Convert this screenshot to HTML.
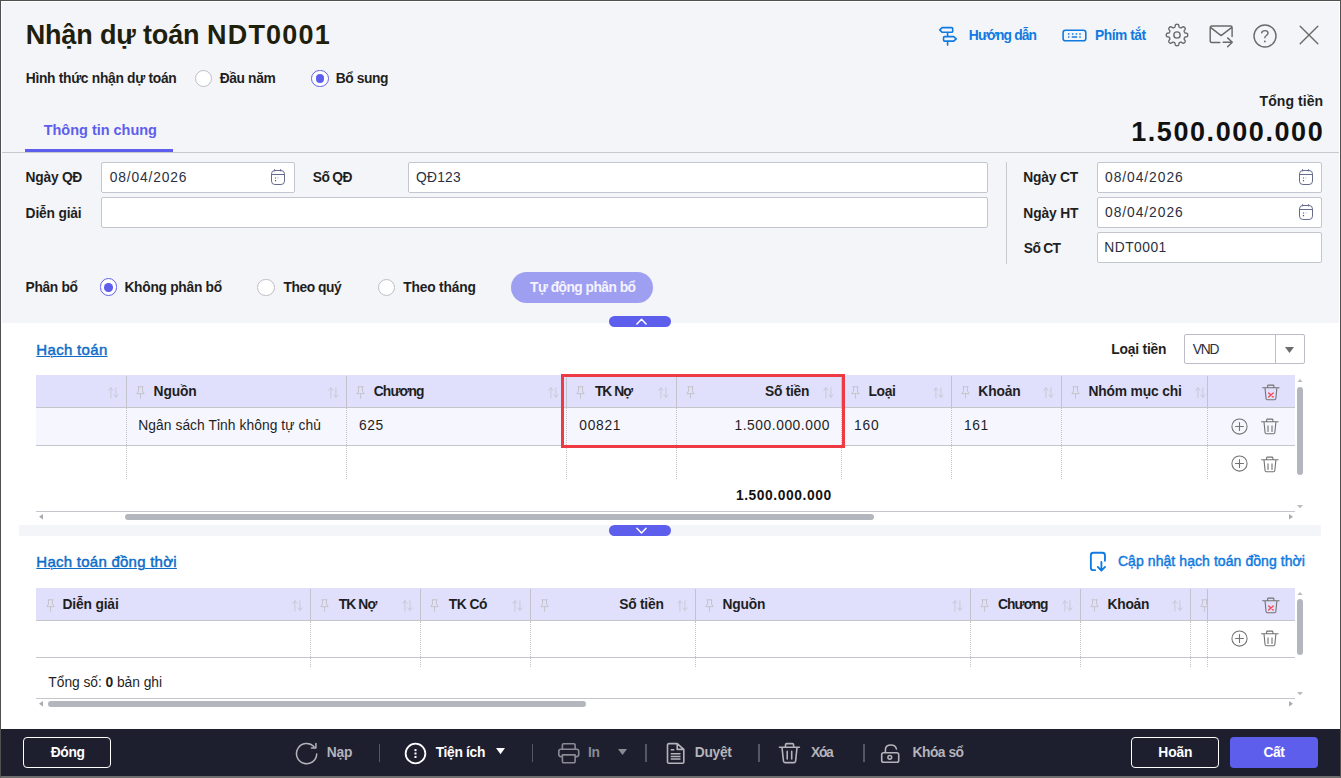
<!DOCTYPE html>
<html lang="vi"><head><meta charset="utf-8"><title>Nhận dự toán NDT0001</title>
<style>
html,body{margin:0;padding:0}
body{width:1341px;height:778px;overflow:hidden;position:relative;background:#fff;font-family:"Liberation Sans", sans-serif;}
.b{position:absolute;display:block}
.t{position:absolute;white-space:nowrap;line-height:1;display:block}
#frame{position:absolute;left:0;top:0;width:1341px;height:778px;box-sizing:border-box;border:1px solid #505050;border-bottom:2px solid #6e6e6e;pointer-events:none}
#frame2{position:absolute;left:1px;top:1px;width:1339px;height:728px;box-sizing:border-box;border:1px solid #fff;border-bottom:0;pointer-events:none}
</style></head><body>
<div class="b" style="left:0px;top:0px;width:1341px;height:323px;background:#f4f5f9"></div>
<span class="t" style="left:25.63px;top:22.00px;font-size:27px;font-weight:700;color:#1f200c;letter-spacing:-0.148px;">Nhận dự toán</span>
<span class="t" style="left:207.03px;top:22.00px;font-size:27px;font-weight:700;color:#1f200c;letter-spacing:1.204px;">NDT0001</span>
<span class="t" style="left:968.82px;top:29.00px;font-size:13.8px;font-weight:700;color:#0f7ae0;letter-spacing:-0.847px;">Hướng dẫn</span>
<span class="t" style="left:1095.12px;top:29.00px;font-size:13.8px;font-weight:700;color:#0f7ae0;letter-spacing:-0.488px;">Phím tắt</span>
<span class="t" style="left:25.72px;top:72.00px;font-size:13.8px;font-weight:700;color:#1f1f1f;letter-spacing:-0.295px;">Hình thức nhận dự toán</span>
<div class="b" style="left:194.60px;top:69.90px;width:17.4px;height:17.4px;border-radius:50%;border:1px solid #bdbdc6;background:#fff;box-sizing:border-box"></div>
<span class="t" style="left:219.75px;top:72.00px;font-size:13.8px;font-weight:700;color:#1f1f1f;letter-spacing:-0.385px;">Đầu năm</span>
<div class="b" style="left:311.00px;top:69.60px;width:17.8px;height:17.8px;border-radius:50%;border:1.5px solid #5e5eec;background:#fff;box-sizing:border-box"></div>
<div class="b" style="left:315.65px;top:74.25px;width:8.5px;height:8.5px;border-radius:50%;background:#5e5eec"></div>
<span class="t" style="left:335.82px;top:72.00px;font-size:13.8px;font-weight:700;color:#1f1f1f;letter-spacing:-0.413px;">Bổ sung</span>
<span class="t" style="left:43.7px;top:123.00px;font-size:14.5px;font-weight:700;color:#5e5eec;letter-spacing:-0.02px;">Thông tin chung</span>
<div class="b" style="left:25px;top:149px;width:148px;height:3px;background:#5e5eec"></div>
<div class="b" style="left:1px;top:152px;width:1339px;height:1px;background:#c9c9cc"></div>
<span class="t" style="left:1259.61px;top:94.00px;font-size:14px;font-weight:700;color:#1f1f1f;letter-spacing:0.057px;">Tổng tiền</span>
<span class="t" style="left:1131.13px;top:119.00px;font-size:27px;font-weight:700;color:#111;letter-spacing:1.573px;">1.500.000.000</span>
<span class="t" style="left:25.62px;top:171.00px;font-size:13.8px;font-weight:700;color:#1f1f1f;letter-spacing:-0.26px;">Ngày QĐ</span>
<div class="b" style="left:101px;top:162px;width:194px;height:31px;background:#fff;border:1px solid #c4c6cf;border-radius:2px;box-sizing:border-box"></div>
<span class="t" style="left:109.74px;top:171.00px;font-size:13.8px;font-weight:400;color:#2b2f42;letter-spacing:0.855px;">08/04/2026</span>
<span class="t" style="left:312.87px;top:171.00px;font-size:13.8px;font-weight:700;color:#1f1f1f;letter-spacing:-0.65px;">Số QĐ</span>
<div class="b" style="left:408px;top:162px;width:580px;height:31px;background:#fff;border:1px solid #c4c6cf;border-radius:2px;box-sizing:border-box"></div>
<span class="t" style="left:416.0px;top:171.00px;font-size:13.8px;font-weight:400;color:#2b2f42;letter-spacing:0.219px;">QĐ123</span>
<span class="t" style="left:25.62px;top:207.00px;font-size:13.8px;font-weight:700;color:#1f1f1f;letter-spacing:-0.187px;">Diễn giải</span>
<div class="b" style="left:101px;top:197px;width:887px;height:31px;background:#fff;border:1px solid #c4c6cf;border-radius:2px;box-sizing:border-box"></div>
<div class="b" style="left:1006px;top:162px;width:1px;height:102px;background:#c9c9cc"></div>
<span class="t" style="left:1023.32px;top:171.00px;font-size:13.8px;font-weight:700;color:#1f1f1f;letter-spacing:-0.198px;">Ngày CT</span>
<span class="t" style="left:1023.32px;top:207.00px;font-size:13.8px;font-weight:700;color:#1f1f1f;letter-spacing:-0.131px;">Ngày HT</span>
<span class="t" style="left:1023.87px;top:242.00px;font-size:13.8px;font-weight:700;color:#1f1f1f;letter-spacing:-0.682px;">Số CT</span>
<div class="b" style="left:1097px;top:162px;width:225px;height:31px;background:#fff;border:1px solid #c4c6cf;border-radius:2px;box-sizing:border-box"></div>
<span class="t" style="left:1105.04px;top:171.00px;font-size:13.8px;font-weight:400;color:#2b2f42;letter-spacing:0.955px;">08/04/2026</span>
<div class="b" style="left:1097px;top:197px;width:225px;height:31px;background:#fff;border:1px solid #c4c6cf;border-radius:2px;box-sizing:border-box"></div>
<span class="t" style="left:1105.04px;top:206.00px;font-size:13.8px;font-weight:400;color:#2b2f42;letter-spacing:0.955px;">08/04/2026</span>
<div class="b" style="left:1097px;top:232px;width:225px;height:31px;background:#fff;border:1px solid #c4c6cf;border-radius:2px;box-sizing:border-box"></div>
<span class="t" style="left:1104.35px;top:241.00px;font-size:13.8px;font-weight:400;color:#2b2f42;letter-spacing:0.472px;">NDT0001</span>
<span class="t" style="left:25.52px;top:281.00px;font-size:13.8px;font-weight:700;color:#1f1f1f;letter-spacing:-0.338px;">Phân bổ</span>
<div class="b" style="left:99.60px;top:278.40px;width:17.8px;height:17.8px;border-radius:50%;border:1.5px solid #5e5eec;background:#fff;box-sizing:border-box"></div>
<div class="b" style="left:104.25px;top:283.05px;width:8.5px;height:8.5px;border-radius:50%;background:#5e5eec"></div>
<span class="t" style="left:124.42px;top:281.00px;font-size:13.8px;font-weight:700;color:#1f1f1f;letter-spacing:-0.281px;">Không phân bổ</span>
<div class="b" style="left:257.30px;top:278.60px;width:17.4px;height:17.4px;border-radius:50%;border:1px solid #bdbdc6;background:#fff;box-sizing:border-box"></div>
<span class="t" style="left:283.61px;top:281.00px;font-size:13.8px;font-weight:700;color:#1f1f1f;letter-spacing:-0.471px;">Theo quý</span>
<div class="b" style="left:377.80px;top:278.60px;width:17.4px;height:17.4px;border-radius:50%;border:1px solid #bdbdc6;background:#fff;box-sizing:border-box"></div>
<span class="t" style="left:403.21px;top:281.00px;font-size:13.8px;font-weight:700;color:#1f1f1f;letter-spacing:-0.181px;">Theo tháng</span>
<div class="b" style="left:511px;top:272px;width:142px;height:31px;background:#9f9ff1;border-radius:16px"></div>
<span class="t" style="left:530.01px;top:281.00px;font-size:13.8px;font-weight:700;color:#f4f4ff;letter-spacing:-0.532px;">Tự động phân bổ</span>
<div class="b" style="left:0px;top:323px;width:1341px;height:406px;background:#fff"></div>
<div class="b" style="left:19px;top:525px;width:1302px;height:11px;background:#f4f5f9"></div>
<div class="b" style="left:609px;top:316px;width:62px;height:11px;background:#5e5eec;border-radius:5.5px"></div>
<svg class="b" style="left:635.5px;top:318px;" width="11" height="7.2" viewBox="0 0 11 7.2" fill="none"><path d="M0.9 6 L5.5 1.2 L10.1 6" stroke="#fff" stroke-width="1.5" stroke-linecap="round" stroke-linejoin="round"/></svg>
<div class="b" style="left:609px;top:525px;width:62px;height:11px;background:#5e5eec;border-radius:5.5px"></div>
<svg class="b" style="left:635.5px;top:527px;" width="11" height="7.2" viewBox="0 0 11 7.2" fill="none"><path d="M0.9 1.2 L5.5 6 L10.1 1.2" stroke="#fff" stroke-width="1.5" stroke-linecap="round" stroke-linejoin="round"/></svg>
<span class="t" style="left:36.35px;top:342.00px;font-size:15px;font-weight:400;color:#0e6cc8;letter-spacing:0.314px;text-decoration:underline;text-underline-offset:1px;text-decoration-thickness:1px;-webkit-text-stroke:0.45px #0e6cc8">Hạch toán</span>
<span class="t" style="left:1111.32px;top:343.00px;font-size:13.8px;font-weight:700;color:#1f1f1f;letter-spacing:-0.19px;">Loại tiền</span>
<div class="b" style="left:1184px;top:334px;width:121px;height:30px;background:#fff;border:1px solid #bcbdc6;border-radius:2px;box-sizing:border-box"></div>
<div class="b" style="left:1275px;top:335px;width:1px;height:28px;background:#bcbdc6"></div>
<svg class="b" style="left:1285px;top:347px;" width="9" height="6" viewBox="0 0 9 6" fill="none"><path d="M0 0 H9 L4.5 6 Z" fill="#6c6c6c"/></svg>
<span class="t" style="left:1192.75px;top:343.00px;font-size:13.8px;font-weight:400;color:#2b2f42;letter-spacing:-1.202px;">VND</span>
<div class="b" style="left:36px;top:375px;width:1259px;height:32px;background:#e0e0fd"></div>
<div class="b" style="left:36px;top:407px;width:1259px;height:1px;background:#c5c6cc"></div>
<div class="b" style="left:36px;top:408px;width:1259px;height:37px;background:#f5f6fe"></div>
<div class="b" style="left:36px;top:445px;width:1259px;height:1px;background:#c5c6cc"></div>
<div class="b" style="left:126px;top:376px;width:1px;height:31px;background:#c2c2cc"></div>
<div class="b" style="left:126px;top:408px;width:0px;height:71px;border-left:1px dotted #c2c2c2"></div>
<div class="b" style="left:346px;top:376px;width:1px;height:31px;background:#c2c2cc"></div>
<div class="b" style="left:346px;top:408px;width:0px;height:71px;border-left:1px dotted #c2c2c2"></div>
<div class="b" style="left:566px;top:376px;width:1px;height:31px;background:#c2c2cc"></div>
<div class="b" style="left:566px;top:408px;width:0px;height:71px;border-left:1px dotted #c2c2c2"></div>
<div class="b" style="left:676px;top:376px;width:1px;height:31px;background:#c2c2cc"></div>
<div class="b" style="left:676px;top:408px;width:0px;height:71px;border-left:1px dotted #c2c2c2"></div>
<div class="b" style="left:841px;top:376px;width:1px;height:31px;background:#c2c2cc"></div>
<div class="b" style="left:841px;top:408px;width:0px;height:71px;border-left:1px dotted #c2c2c2"></div>
<div class="b" style="left:951px;top:376px;width:1px;height:31px;background:#c2c2cc"></div>
<div class="b" style="left:951px;top:408px;width:0px;height:71px;border-left:1px dotted #c2c2c2"></div>
<div class="b" style="left:1061px;top:376px;width:1px;height:31px;background:#c2c2cc"></div>
<div class="b" style="left:1061px;top:408px;width:0px;height:71px;border-left:1px dotted #c2c2c2"></div>
<div class="b" style="left:1207px;top:376px;width:1px;height:31px;background:#c2c2cc"></div>
<div class="b" style="left:1207px;top:408px;width:0px;height:71px;border-left:1px dotted #c2c2c2"></div>
<svg class="b" style="left:107.5px;top:386.5px;" width="11.5" height="12" viewBox="0 0 11.5 12" fill="none"><path d="M2.9 11.1 V0.9 M0.8 3.3 L2.9 0.8 L5 3.3 M7.9 0.8 V10.2 M5.7 7.8 L7.9 10.3 L10.1 7.8" stroke="#c8c9d4" stroke-width="1" stroke-linecap="round" stroke-linejoin="round"/></svg>
<svg class="b" style="left:136.0px;top:385.5px;" width="9" height="13" viewBox="0 0 9 13" fill="none"><path d="M2 0.8 H7 M2.5 0.8 V5 L0.8 7.7 H8.2 L6.5 5 V0.8 M4.5 7.7 V12.2" stroke="#c4c4cb" stroke-width="1" stroke-linecap="round" stroke-linejoin="round"/></svg>
<span class="t" style="left:153.62px;top:385.00px;font-size:13.8px;font-weight:700;color:#1f1f1f;letter-spacing:-0.167px;">Nguồn</span>
<svg class="b" style="left:327.5px;top:386.5px;" width="11.5" height="12" viewBox="0 0 11.5 12" fill="none"><path d="M2.9 11.1 V0.9 M0.8 3.3 L2.9 0.8 L5 3.3 M7.9 0.8 V10.2 M5.7 7.8 L7.9 10.3 L10.1 7.8" stroke="#c8c9d4" stroke-width="1" stroke-linecap="round" stroke-linejoin="round"/></svg>
<svg class="b" style="left:356.0px;top:385.5px;" width="9" height="13" viewBox="0 0 9 13" fill="none"><path d="M2 0.8 H7 M2.5 0.8 V5 L0.8 7.7 H8.2 L6.5 5 V0.8 M4.5 7.7 V12.2" stroke="#c4c4cb" stroke-width="1" stroke-linecap="round" stroke-linejoin="round"/></svg>
<span class="t" style="left:373.8px;top:385.00px;font-size:13.8px;font-weight:700;color:#1f1f1f;letter-spacing:-0.903px;">Chương</span>
<svg class="b" style="left:547.5px;top:386.5px;" width="11.5" height="12" viewBox="0 0 11.5 12" fill="none"><path d="M2.9 11.1 V0.9 M0.8 3.3 L2.9 0.8 L5 3.3 M7.9 0.8 V10.2 M5.7 7.8 L7.9 10.3 L10.1 7.8" stroke="#c8c9d4" stroke-width="1" stroke-linecap="round" stroke-linejoin="round"/></svg>
<svg class="b" style="left:576.0px;top:385.5px;" width="9" height="13" viewBox="0 0 9 13" fill="none"><path d="M2 0.8 H7 M2.5 0.8 V5 L0.8 7.7 H8.2 L6.5 5 V0.8 M4.5 7.7 V12.2" stroke="#c4c4cb" stroke-width="1" stroke-linecap="round" stroke-linejoin="round"/></svg>
<span class="t" style="left:594.91px;top:385.00px;font-size:13.8px;font-weight:700;color:#1f1f1f;letter-spacing:-0.961px;">TK Nợ</span>
<svg class="b" style="left:657.5px;top:386.5px;" width="11.5" height="12" viewBox="0 0 11.5 12" fill="none"><path d="M2.9 11.1 V0.9 M0.8 3.3 L2.9 0.8 L5 3.3 M7.9 0.8 V10.2 M5.7 7.8 L7.9 10.3 L10.1 7.8" stroke="#c8c9d4" stroke-width="1" stroke-linecap="round" stroke-linejoin="round"/></svg>
<svg class="b" style="left:686.0px;top:385.5px;" width="9" height="13" viewBox="0 0 9 13" fill="none"><path d="M2 0.8 H7 M2.5 0.8 V5 L0.8 7.7 H8.2 L6.5 5 V0.8 M4.5 7.7 V12.2" stroke="#c4c4cb" stroke-width="1" stroke-linecap="round" stroke-linejoin="round"/></svg>
<span class="t" style="left:765.07px;top:385.00px;font-size:13.8px;font-weight:700;color:#1f1f1f;letter-spacing:-0.273px;">Số tiền</span>
<svg class="b" style="left:822.5px;top:386.5px;" width="11.5" height="12" viewBox="0 0 11.5 12" fill="none"><path d="M2.9 11.1 V0.9 M0.8 3.3 L2.9 0.8 L5 3.3 M7.9 0.8 V10.2 M5.7 7.8 L7.9 10.3 L10.1 7.8" stroke="#c8c9d4" stroke-width="1" stroke-linecap="round" stroke-linejoin="round"/></svg>
<svg class="b" style="left:851.0px;top:385.5px;" width="9" height="13" viewBox="0 0 9 13" fill="none"><path d="M2 0.8 H7 M2.5 0.8 V5 L0.8 7.7 H8.2 L6.5 5 V0.8 M4.5 7.7 V12.2" stroke="#c4c4cb" stroke-width="1" stroke-linecap="round" stroke-linejoin="round"/></svg>
<span class="t" style="left:868.42px;top:385.00px;font-size:13.8px;font-weight:700;color:#1f1f1f;letter-spacing:-0.318px;">Loại</span>
<svg class="b" style="left:932.5px;top:386.5px;" width="11.5" height="12" viewBox="0 0 11.5 12" fill="none"><path d="M2.9 11.1 V0.9 M0.8 3.3 L2.9 0.8 L5 3.3 M7.9 0.8 V10.2 M5.7 7.8 L7.9 10.3 L10.1 7.8" stroke="#c8c9d4" stroke-width="1" stroke-linecap="round" stroke-linejoin="round"/></svg>
<svg class="b" style="left:961.0px;top:385.5px;" width="9" height="13" viewBox="0 0 9 13" fill="none"><path d="M2 0.8 H7 M2.5 0.8 V5 L0.8 7.7 H8.2 L6.5 5 V0.8 M4.5 7.7 V12.2" stroke="#c4c4cb" stroke-width="1" stroke-linecap="round" stroke-linejoin="round"/></svg>
<span class="t" style="left:978.32px;top:385.00px;font-size:13.8px;font-weight:700;color:#1f1f1f;letter-spacing:-0.128px;">Khoản</span>
<svg class="b" style="left:1042.5px;top:386.5px;" width="11.5" height="12" viewBox="0 0 11.5 12" fill="none"><path d="M2.9 11.1 V0.9 M0.8 3.3 L2.9 0.8 L5 3.3 M7.9 0.8 V10.2 M5.7 7.8 L7.9 10.3 L10.1 7.8" stroke="#c8c9d4" stroke-width="1" stroke-linecap="round" stroke-linejoin="round"/></svg>
<svg class="b" style="left:1071.0px;top:385.5px;" width="9" height="13" viewBox="0 0 9 13" fill="none"><path d="M2 0.8 H7 M2.5 0.8 V5 L0.8 7.7 H8.2 L6.5 5 V0.8 M4.5 7.7 V12.2" stroke="#c4c4cb" stroke-width="1" stroke-linecap="round" stroke-linejoin="round"/></svg>
<span class="t" style="left:1088.42px;top:385.00px;font-size:13.8px;font-weight:700;color:#1f1f1f;letter-spacing:-0.142px;">Nhóm mục chi</span>
<svg class="b" style="left:1194.9px;top:386.5px;" width="11.5" height="12" viewBox="0 0 11.5 12" fill="none"><path d="M2.9 11.1 V0.9 M0.8 3.3 L2.9 0.8 L5 3.3 M7.9 0.8 V10.2 M5.7 7.8 L7.9 10.3 L10.1 7.8" stroke="#c8c9d4" stroke-width="1" stroke-linecap="round" stroke-linejoin="round"/></svg>
<svg class="b" style="left:1261.5px;top:383.6px;" width="18" height="17" viewBox="0 0 18 17" fill="none"><path d="M0.6 3.8 H17.1 M5.6 3.6 V2 Q5.6 1.1 6.5 1.1 H11 Q11.9 1.1 11.9 2 V3.6 M3.0 4 L4.1 14.8 Q4.2 15.8 5.2 15.8 H12.7 Q13.7 15.8 13.8 14.8 L14.9 4" stroke="#727272" stroke-width="1.1" stroke-linecap="round" stroke-linejoin="round"/><path d="M6.7 8.9 L11.2 13 M11.2 8.9 L6.7 13" stroke="#f5434b" stroke-width="1.3" stroke-linecap="round"/></svg>
<span class="t" style="left:138.25px;top:419.00px;font-size:13.8px;font-weight:400;color:#1f1f1f;letter-spacing:0.069px;">Ngân sách Tỉnh không tự chủ</span>
<span class="t" style="left:359.06px;top:419.00px;font-size:13.8px;font-weight:400;color:#1f1f1f;letter-spacing:0.557px;">625</span>
<span class="t" style="left:579.34px;top:419.00px;font-size:13.8px;font-weight:400;color:#1f1f1f;letter-spacing:0.707px;">00821</span>
<span class="t" style="left:734.48px;top:419.00px;font-size:13.8px;font-weight:400;color:#1f1f1f;letter-spacing:0.555px;">1.500.000.000</span>
<span class="t" style="left:854.08px;top:419.00px;font-size:13.8px;font-weight:400;color:#1f1f1f;letter-spacing:0.745px;">160</span>
<span class="t" style="left:964.08px;top:419.00px;font-size:13.8px;font-weight:400;color:#1f1f1f;letter-spacing:0.514px;">161</span>
<svg class="b" style="left:1230.5px;top:417.8px;" width="17" height="17" viewBox="0 0 17 17" fill="none"><circle cx="8.5" cy="8.5" r="7.6" stroke="#727272" stroke-width="1.05"/><path d="M8.5 4.6 V12.4 M4.6 8.5 H12.4" stroke="#727272" stroke-width="1.1" stroke-linecap="round"/></svg>
<svg class="b" style="left:1260.6px;top:417.9px;" width="18" height="17" viewBox="0 0 18 17" fill="none"><path d="M0.6 3.8 H17.1 M5.6 3.6 V2 Q5.6 1.1 6.5 1.1 H11 Q11.9 1.1 11.9 2 V3.6 M3.0 4 L4.1 14.8 Q4.2 15.8 5.2 15.8 H12.7 Q13.7 15.8 13.8 14.8 L14.9 4" stroke="#727272" stroke-width="1.1" stroke-linecap="round" stroke-linejoin="round"/><path d="M7.0 7.9 V13.4 M11.0 7.9 V13.4" stroke="#727272" stroke-width="1.1" stroke-linecap="round"/></svg>
<svg class="b" style="left:1230.5px;top:455.4px;" width="17" height="17" viewBox="0 0 17 17" fill="none"><circle cx="8.5" cy="8.5" r="7.6" stroke="#727272" stroke-width="1.05"/><path d="M8.5 4.6 V12.4 M4.6 8.5 H12.4" stroke="#727272" stroke-width="1.1" stroke-linecap="round"/></svg>
<svg class="b" style="left:1260.6px;top:455.5px;" width="18" height="17" viewBox="0 0 18 17" fill="none"><path d="M0.6 3.8 H17.1 M5.6 3.6 V2 Q5.6 1.1 6.5 1.1 H11 Q11.9 1.1 11.9 2 V3.6 M3.0 4 L4.1 14.8 Q4.2 15.8 5.2 15.8 H12.7 Q13.7 15.8 13.8 14.8 L14.9 4" stroke="#727272" stroke-width="1.1" stroke-linecap="round" stroke-linejoin="round"/><path d="M7.0 7.9 V13.4 M11.0 7.9 V13.4" stroke="#727272" stroke-width="1.1" stroke-linecap="round"/></svg>
<span class="t" style="left:735.92px;top:489.00px;font-size:13.8px;font-weight:700;color:#111;letter-spacing:0.585px;">1.500.000.000</span>
<div class="b" style="left:561px;top:374px;width:284px;height:74px;border:3px solid #ee3a43;box-sizing:border-box"></div>
<div class="b" style="left:36px;top:511px;width:1259px;height:1px;background:#c5c6cc"></div>
<div class="b" style="left:125px;top:514px;width:748.7px;height:6px;background:#b3b6bd;border-radius:3px"></div>
<svg class="b" style="left:39px;top:514.3px;" width="4" height="5.6" viewBox="0 0 4 5.6" fill="none"><path d="M4 0 V5.6 L0 2.8 Z" fill="#a8abb3"/></svg>
<svg class="b" style="left:1288.5px;top:514.3px;" width="4" height="5.6" viewBox="0 0 4 5.6" fill="none"><path d="M0 0 V5.6 L4 2.8 Z" fill="#a8abb3"/></svg>
<div class="b" style="left:1297px;top:387px;width:6px;height:87.5px;background:#b3b6bd;border-radius:3px"></div>
<svg class="b" style="left:1297px;top:378.8px;" width="6" height="3.4" viewBox="0 0 6 3.4" fill="none"><path d="M0 3.4 H6 L3 0 Z" fill="#b9bcc3"/></svg>
<svg class="b" style="left:1297px;top:505px;" width="6" height="3.4" viewBox="0 0 6 3.4" fill="none"><path d="M0 0 H6 L3 3.4 Z" fill="#b9bcc3"/></svg>
<span class="t" style="left:36.35px;top:554.00px;font-size:15px;font-weight:400;color:#0e6cc8;letter-spacing:0.251px;text-decoration:underline;text-underline-offset:1px;text-decoration-thickness:1px;-webkit-text-stroke:0.45px #0e6cc8">Hạch toán đồng thời</span>
<span class="t" style="left:1117.95px;top:554.00px;font-size:14px;font-weight:400;color:#0f7ae0;letter-spacing:0.071px;-webkit-text-stroke:0.45px #0f7ae0">Cập nhật hạch toán đồng thời</span>
<div class="b" style="left:36px;top:588px;width:1259px;height:32px;background:#e0e0fd"></div>
<div class="b" style="left:36px;top:620px;width:1259px;height:1px;background:#c5c6cc"></div>
<div class="b" style="left:36px;top:657px;width:1259px;height:1px;background:#c5c6cc"></div>
<div class="b" style="left:310px;top:589px;width:1px;height:31px;background:#c2c2cc"></div>
<div class="b" style="left:310px;top:621px;width:0px;height:46px;border-left:1px dotted #c2c2c2"></div>
<div class="b" style="left:420px;top:589px;width:1px;height:31px;background:#c2c2cc"></div>
<div class="b" style="left:420px;top:621px;width:0px;height:46px;border-left:1px dotted #c2c2c2"></div>
<div class="b" style="left:530px;top:589px;width:1px;height:31px;background:#c2c2cc"></div>
<div class="b" style="left:530px;top:621px;width:0px;height:46px;border-left:1px dotted #c2c2c2"></div>
<div class="b" style="left:695px;top:589px;width:1px;height:31px;background:#c2c2cc"></div>
<div class="b" style="left:695px;top:621px;width:0px;height:46px;border-left:1px dotted #c2c2c2"></div>
<div class="b" style="left:970px;top:589px;width:1px;height:31px;background:#c2c2cc"></div>
<div class="b" style="left:970px;top:621px;width:0px;height:46px;border-left:1px dotted #c2c2c2"></div>
<div class="b" style="left:1080px;top:589px;width:1px;height:31px;background:#c2c2cc"></div>
<div class="b" style="left:1080px;top:621px;width:0px;height:46px;border-left:1px dotted #c2c2c2"></div>
<div class="b" style="left:1190px;top:589px;width:1px;height:31px;background:#c2c2cc"></div>
<div class="b" style="left:1190px;top:621px;width:0px;height:46px;border-left:1px dotted #c2c2c2"></div>
<div class="b" style="left:1207px;top:589px;width:1px;height:31px;background:#c2c2cc"></div>
<div class="b" style="left:1207px;top:621px;width:0px;height:46px;border-left:1px dotted #c2c2c2"></div>
<svg class="b" style="left:45.5px;top:598.5px;" width="9" height="13" viewBox="0 0 9 13" fill="none"><path d="M2 0.8 H7 M2.5 0.8 V5 L0.8 7.7 H8.2 L6.5 5 V0.8 M4.5 7.7 V12.2" stroke="#c4c4cb" stroke-width="1" stroke-linecap="round" stroke-linejoin="round"/></svg>
<span class="t" style="left:62.52px;top:598.00px;font-size:13.8px;font-weight:700;color:#1f1f1f;letter-spacing:-0.162px;">Diễn giải</span>
<svg class="b" style="left:291.5px;top:599.5px;" width="11.5" height="12" viewBox="0 0 11.5 12" fill="none"><path d="M2.9 11.1 V0.9 M0.8 3.3 L2.9 0.8 L5 3.3 M7.9 0.8 V10.2 M5.7 7.8 L7.9 10.3 L10.1 7.8" stroke="#c8c9d4" stroke-width="1" stroke-linecap="round" stroke-linejoin="round"/></svg>
<svg class="b" style="left:320.0px;top:598.5px;" width="9" height="13" viewBox="0 0 9 13" fill="none"><path d="M2 0.8 H7 M2.5 0.8 V5 L0.8 7.7 H8.2 L6.5 5 V0.8 M4.5 7.7 V12.2" stroke="#c4c4cb" stroke-width="1" stroke-linecap="round" stroke-linejoin="round"/></svg>
<span class="t" style="left:338.81px;top:598.00px;font-size:13.8px;font-weight:700;color:#1f1f1f;letter-spacing:-0.886px;">TK Nợ</span>
<svg class="b" style="left:401.5px;top:599.5px;" width="11.5" height="12" viewBox="0 0 11.5 12" fill="none"><path d="M2.9 11.1 V0.9 M0.8 3.3 L2.9 0.8 L5 3.3 M7.9 0.8 V10.2 M5.7 7.8 L7.9 10.3 L10.1 7.8" stroke="#c8c9d4" stroke-width="1" stroke-linecap="round" stroke-linejoin="round"/></svg>
<svg class="b" style="left:430.0px;top:598.5px;" width="9" height="13" viewBox="0 0 9 13" fill="none"><path d="M2 0.8 H7 M2.5 0.8 V5 L0.8 7.7 H8.2 L6.5 5 V0.8 M4.5 7.7 V12.2" stroke="#c4c4cb" stroke-width="1" stroke-linecap="round" stroke-linejoin="round"/></svg>
<span class="t" style="left:448.71px;top:598.00px;font-size:13.8px;font-weight:700;color:#1f1f1f;letter-spacing:-0.478px;">TK Có</span>
<svg class="b" style="left:511.5px;top:599.5px;" width="11.5" height="12" viewBox="0 0 11.5 12" fill="none"><path d="M2.9 11.1 V0.9 M0.8 3.3 L2.9 0.8 L5 3.3 M7.9 0.8 V10.2 M5.7 7.8 L7.9 10.3 L10.1 7.8" stroke="#c8c9d4" stroke-width="1" stroke-linecap="round" stroke-linejoin="round"/></svg>
<svg class="b" style="left:540.0px;top:598.5px;" width="9" height="13" viewBox="0 0 9 13" fill="none"><path d="M2 0.8 H7 M2.5 0.8 V5 L0.8 7.7 H8.2 L6.5 5 V0.8 M4.5 7.7 V12.2" stroke="#c4c4cb" stroke-width="1" stroke-linecap="round" stroke-linejoin="round"/></svg>
<span class="t" style="left:619.27px;top:598.00px;font-size:13.8px;font-weight:700;color:#1f1f1f;letter-spacing:-0.239px;">Số tiền</span>
<svg class="b" style="left:676.5px;top:599.5px;" width="11.5" height="12" viewBox="0 0 11.5 12" fill="none"><path d="M2.9 11.1 V0.9 M0.8 3.3 L2.9 0.8 L5 3.3 M7.9 0.8 V10.2 M5.7 7.8 L7.9 10.3 L10.1 7.8" stroke="#c8c9d4" stroke-width="1" stroke-linecap="round" stroke-linejoin="round"/></svg>
<svg class="b" style="left:705.0px;top:598.5px;" width="9" height="13" viewBox="0 0 9 13" fill="none"><path d="M2 0.8 H7 M2.5 0.8 V5 L0.8 7.7 H8.2 L6.5 5 V0.8 M4.5 7.7 V12.2" stroke="#c4c4cb" stroke-width="1" stroke-linecap="round" stroke-linejoin="round"/></svg>
<span class="t" style="left:722.42px;top:598.00px;font-size:13.8px;font-weight:700;color:#1f1f1f;letter-spacing:-0.142px;">Nguồn</span>
<svg class="b" style="left:951.5px;top:599.5px;" width="11.5" height="12" viewBox="0 0 11.5 12" fill="none"><path d="M2.9 11.1 V0.9 M0.8 3.3 L2.9 0.8 L5 3.3 M7.9 0.8 V10.2 M5.7 7.8 L7.9 10.3 L10.1 7.8" stroke="#c8c9d4" stroke-width="1" stroke-linecap="round" stroke-linejoin="round"/></svg>
<svg class="b" style="left:980.0px;top:598.5px;" width="9" height="13" viewBox="0 0 9 13" fill="none"><path d="M2 0.8 H7 M2.5 0.8 V5 L0.8 7.7 H8.2 L6.5 5 V0.8 M4.5 7.7 V12.2" stroke="#c4c4cb" stroke-width="1" stroke-linecap="round" stroke-linejoin="round"/></svg>
<span class="t" style="left:998.0px;top:598.00px;font-size:13.8px;font-weight:700;color:#1f1f1f;letter-spacing:-0.903px;">Chương</span>
<svg class="b" style="left:1061.5px;top:599.5px;" width="11.5" height="12" viewBox="0 0 11.5 12" fill="none"><path d="M2.9 11.1 V0.9 M0.8 3.3 L2.9 0.8 L5 3.3 M7.9 0.8 V10.2 M5.7 7.8 L7.9 10.3 L10.1 7.8" stroke="#c8c9d4" stroke-width="1" stroke-linecap="round" stroke-linejoin="round"/></svg>
<svg class="b" style="left:1090.0px;top:598.5px;" width="9" height="13" viewBox="0 0 9 13" fill="none"><path d="M2 0.8 H7 M2.5 0.8 V5 L0.8 7.7 H8.2 L6.5 5 V0.8 M4.5 7.7 V12.2" stroke="#c4c4cb" stroke-width="1" stroke-linecap="round" stroke-linejoin="round"/></svg>
<span class="t" style="left:1107.42px;top:598.00px;font-size:13.8px;font-weight:700;color:#1f1f1f;letter-spacing:-0.203px;">Khoản</span>
<svg class="b" style="left:1171.5px;top:599.5px;" width="11.5" height="12" viewBox="0 0 11.5 12" fill="none"><path d="M2.9 11.1 V0.9 M0.8 3.3 L2.9 0.8 L5 3.3 M7.9 0.8 V10.2 M5.7 7.8 L7.9 10.3 L10.1 7.8" stroke="#c8c9d4" stroke-width="1" stroke-linecap="round" stroke-linejoin="round"/></svg>
<div class="b" style="left:1191px;top:589px;width:16px;height:31px;overflow:hidden">
<svg class="b" style="left:9px;top:9.5px;" width="9" height="13" viewBox="0 0 9 13" fill="none"><path d="M2 0.8 H7 M2.5 0.8 V5 L0.8 7.7 H8.2 L6.5 5 V0.8 M4.5 7.7 V12.2" stroke="#c4c4cb" stroke-width="1" stroke-linecap="round" stroke-linejoin="round"/></svg>
</div>
<svg class="b" style="left:1261.5px;top:596.6px;" width="18" height="17" viewBox="0 0 18 17" fill="none"><path d="M0.6 3.8 H17.1 M5.6 3.6 V2 Q5.6 1.1 6.5 1.1 H11 Q11.9 1.1 11.9 2 V3.6 M3.0 4 L4.1 14.8 Q4.2 15.8 5.2 15.8 H12.7 Q13.7 15.8 13.8 14.8 L14.9 4" stroke="#727272" stroke-width="1.1" stroke-linecap="round" stroke-linejoin="round"/><path d="M6.7 8.9 L11.2 13 M11.2 8.9 L6.7 13" stroke="#f5434b" stroke-width="1.3" stroke-linecap="round"/></svg>
<svg class="b" style="left:1230.5px;top:630.3px;" width="17" height="17" viewBox="0 0 17 17" fill="none"><circle cx="8.5" cy="8.5" r="7.6" stroke="#727272" stroke-width="1.05"/><path d="M8.5 4.6 V12.4 M4.6 8.5 H12.4" stroke="#727272" stroke-width="1.1" stroke-linecap="round"/></svg>
<svg class="b" style="left:1260.6px;top:630.4px;" width="18" height="17" viewBox="0 0 18 17" fill="none"><path d="M0.6 3.8 H17.1 M5.6 3.6 V2 Q5.6 1.1 6.5 1.1 H11 Q11.9 1.1 11.9 2 V3.6 M3.0 4 L4.1 14.8 Q4.2 15.8 5.2 15.8 H12.7 Q13.7 15.8 13.8 14.8 L14.9 4" stroke="#727272" stroke-width="1.1" stroke-linecap="round" stroke-linejoin="round"/><path d="M7.0 7.9 V13.4 M11.0 7.9 V13.4" stroke="#727272" stroke-width="1.1" stroke-linecap="round"/></svg>
<span class="t" style="left:48.37px;top:676.00px;font-size:13.8px;font-weight:400;color:#1f1f1f;letter-spacing:-0.037px;">Tổng số: <b>0</b> bản ghi</span>
<div class="b" style="left:36px;top:698px;width:1259px;height:1px;background:#c5c6cc"></div>
<div class="b" style="left:47.5px;top:701px;width:538.5px;height:6px;background:#b3b6bd;border-radius:3px"></div>
<svg class="b" style="left:39px;top:701.3px;" width="4" height="5.6" viewBox="0 0 4 5.6" fill="none"><path d="M4 0 V5.6 L0 2.8 Z" fill="#a8abb3"/></svg>
<svg class="b" style="left:1288.5px;top:701.3px;" width="4" height="5.6" viewBox="0 0 4 5.6" fill="none"><path d="M0 0 V5.6 L4 2.8 Z" fill="#a8abb3"/></svg>
<div class="b" style="left:1297px;top:599px;width:6px;height:56px;background:#b3b6bd;border-radius:3px"></div>
<svg class="b" style="left:1297px;top:591.6px;" width="6" height="3.4" viewBox="0 0 6 3.4" fill="none"><path d="M0 3.4 H6 L3 0 Z" fill="#b9bcc3"/></svg>
<svg class="b" style="left:1297px;top:692px;" width="6" height="3.4" viewBox="0 0 6 3.4" fill="none"><path d="M0 0 H6 L3 3.4 Z" fill="#b9bcc3"/></svg>
<div class="b" style="left:0px;top:729px;width:1341px;height:49px;background:#1d1e2e"></div>
<div class="b" style="left:23px;top:737px;width:88px;height:31px;border:1px solid #fff;border-radius:4px;box-sizing:border-box"></div>
<span class="t" style="left:50.75px;top:746.00px;font-size:13.8px;font-weight:700;color:#fff;letter-spacing:-0.355px;">Đóng</span>
<div class="b" style="left:1131px;top:737px;width:88px;height:31px;border:1px solid #fff;border-radius:4px;box-sizing:border-box"></div>
<span class="t" style="left:1158.32px;top:746.00px;font-size:13.8px;font-weight:700;color:#fff;letter-spacing:-0.094px;">Hoãn</span>
<div class="b" style="left:1230px;top:737px;width:88px;height:31px;background:#5e5eec;border-radius:4px"></div>
<span class="t" style="left:1263.4px;top:746.00px;font-size:13.8px;font-weight:700;color:#fff;letter-spacing:-0.396px;">Cất</span>
<span class="t" style="left:326.72px;top:746.00px;font-size:13.8px;font-weight:700;color:#b4b4ba;letter-spacing:-0.164px;">Nạp</span>
<span class="t" style="left:435.71px;top:746.00px;font-size:13.8px;font-weight:700;color:#fff;letter-spacing:-0.323px;">Tiện ích</span>
<span class="t" style="left:587.92px;top:746.00px;font-size:13.8px;font-weight:700;color:#8b8b94;letter-spacing:-0.246px;">In</span>
<span class="t" style="left:694.82px;top:746.00px;font-size:13.8px;font-weight:700;color:#b4b4ba;letter-spacing:-0.33px;">Duyệt</span>
<span class="t" style="left:811.05px;top:746.00px;font-size:13.8px;font-weight:700;color:#b4b4ba;letter-spacing:-1.325px;">Xóa</span>
<span class="t" style="left:912.52px;top:746.00px;font-size:13.8px;font-weight:700;color:#b4b4ba;letter-spacing:-0.489px;">Khóa sổ</span>
<div class="b" style="left:378.7px;top:744px;width:1.6px;height:18px;background:#55566a"></div>
<div class="b" style="left:531.7px;top:744px;width:1.6px;height:18px;background:#55566a"></div>
<div class="b" style="left:645.0px;top:744px;width:1.6px;height:18px;background:#55566a"></div>
<div class="b" style="left:758.0px;top:744px;width:1.6px;height:18px;background:#55566a"></div>
<div class="b" style="left:863.2px;top:744px;width:1.6px;height:18px;background:#55566a"></div>
<svg class="b" style="left:496.2px;top:748.3px;" width="9" height="6.3" viewBox="0 0 9 6.3" fill="none"><path d="M0 0 H9 L4.5 6.3 Z" fill="#fff"/></svg>
<svg class="b" style="left:617.9px;top:748.5px;" width="9" height="6" viewBox="0 0 9 6" fill="none"><path d="M0 0 H9 L4.5 6 Z" fill="#8b8b94"/></svg>
<svg class="b" style="left:938px;top:26px" width="20" height="21" viewBox="0 0 20 21" fill="none"><path d="M4.2 1.6 H13.6 Q14.7 1.6 14.7 2.7 V5.2 Q14.7 6.3 13.6 6.3 H4.2 L1.7 3.95 Z M6.6 10.65 H15.7 L18.2 12.9 L15.7 15.15 H6.6 Q5.55 15.15 5.55 14.1 V11.7 Q5.55 10.65 6.6 10.65 Z M9.6 6.4 V10.6 M9.6 15.2 V19.1" stroke="#0f7ae0" stroke-width="1.6" stroke-linejoin="round" stroke-linecap="round"/></svg>
<svg class="b" style="left:1062px;top:28.5px" width="25" height="13" viewBox="0 0 25 13" fill="none"><rect x="1.1" y="1.2" width="22.7" height="10.6" rx="2.3" stroke="#0f7ae0" stroke-width="1.6"/><path d="M5.95 5 H7.45 M9.95 5 H11.45 M13.65 5 H15.15 M17.25 5 H18.75 M5.95 8.1 H7.45 M9.7 8.1 H15.2 M17.25 8.1 H18.75" stroke="#0f7ae0" stroke-width="1.5"/></svg>
<svg class="b" style="left:1164.8px;top:23.1px" width="24" height="24" viewBox="0 0 24 24" fill="none"><path d="M12.00 1.30 L12.28 1.31 L12.56 1.33 L12.84 1.38 L13.11 1.46 L13.36 1.63 L13.59 1.96 L13.76 2.50 L13.88 3.16 L13.99 3.70 L14.13 4.04 L14.30 4.23 L14.49 4.35 L14.68 4.44 L14.87 4.53 L15.06 4.61 L15.26 4.69 L15.45 4.77 L15.65 4.83 L15.87 4.88 L16.12 4.86 L16.46 4.73 L16.92 4.42 L17.47 4.04 L17.98 3.77 L18.37 3.70 L18.67 3.77 L18.92 3.90 L19.15 4.06 L19.36 4.24 L19.57 4.43 L19.76 4.64 L19.94 4.85 L20.10 5.08 L20.23 5.33 L20.30 5.63 L20.23 6.02 L19.96 6.53 L19.58 7.08 L19.27 7.54 L19.14 7.88 L19.12 8.13 L19.17 8.35 L19.23 8.55 L19.31 8.74 L19.39 8.94 L19.47 9.13 L19.56 9.32 L19.65 9.51 L19.77 9.70 L19.96 9.87 L20.30 10.01 L20.84 10.12 L21.50 10.24 L22.04 10.41 L22.37 10.64 L22.54 10.89 L22.62 11.16 L22.67 11.44 L22.69 11.72 L22.70 12.00 L22.69 12.28 L22.67 12.56 L22.62 12.84 L22.54 13.11 L22.37 13.36 L22.04 13.59 L21.50 13.76 L20.84 13.88 L20.30 13.99 L19.96 14.13 L19.77 14.30 L19.65 14.49 L19.56 14.68 L19.47 14.87 L19.39 15.06 L19.31 15.26 L19.23 15.45 L19.17 15.65 L19.12 15.87 L19.14 16.12 L19.27 16.46 L19.58 16.92 L19.96 17.47 L20.23 17.98 L20.30 18.37 L20.23 18.67 L20.10 18.92 L19.94 19.15 L19.76 19.36 L19.57 19.57 L19.36 19.76 L19.15 19.94 L18.92 20.10 L18.67 20.23 L18.37 20.30 L17.98 20.23 L17.47 19.96 L16.92 19.58 L16.46 19.27 L16.12 19.14 L15.87 19.12 L15.65 19.17 L15.45 19.23 L15.26 19.31 L15.06 19.39 L14.87 19.47 L14.68 19.56 L14.49 19.65 L14.30 19.77 L14.13 19.96 L13.99 20.30 L13.88 20.84 L13.76 21.50 L13.59 22.04 L13.36 22.37 L13.11 22.54 L12.84 22.62 L12.56 22.67 L12.28 22.69 L12.00 22.70 L11.72 22.69 L11.44 22.67 L11.16 22.62 L10.89 22.54 L10.64 22.37 L10.41 22.04 L10.24 21.50 L10.12 20.84 L10.01 20.30 L9.87 19.96 L9.70 19.77 L9.51 19.65 L9.32 19.56 L9.13 19.47 L8.94 19.39 L8.74 19.31 L8.55 19.23 L8.35 19.17 L8.13 19.12 L7.88 19.14 L7.54 19.27 L7.08 19.58 L6.53 19.96 L6.02 20.23 L5.63 20.30 L5.33 20.23 L5.08 20.10 L4.85 19.94 L4.64 19.76 L4.43 19.57 L4.24 19.36 L4.06 19.15 L3.90 18.92 L3.77 18.67 L3.70 18.37 L3.77 17.98 L4.04 17.47 L4.42 16.92 L4.73 16.46 L4.86 16.12 L4.88 15.87 L4.83 15.65 L4.77 15.45 L4.69 15.26 L4.61 15.06 L4.53 14.87 L4.44 14.68 L4.35 14.49 L4.23 14.30 L4.04 14.13 L3.70 13.99 L3.16 13.88 L2.50 13.76 L1.96 13.59 L1.63 13.36 L1.46 13.11 L1.38 12.84 L1.33 12.56 L1.31 12.28 L1.30 12.00 L1.31 11.72 L1.33 11.44 L1.38 11.16 L1.46 10.89 L1.63 10.64 L1.96 10.41 L2.50 10.24 L3.16 10.12 L3.70 10.01 L4.04 9.87 L4.23 9.70 L4.35 9.51 L4.44 9.32 L4.53 9.13 L4.61 8.94 L4.69 8.74 L4.77 8.55 L4.83 8.35 L4.88 8.13 L4.86 7.88 L4.73 7.54 L4.42 7.08 L4.04 6.53 L3.77 6.02 L3.70 5.63 L3.77 5.33 L3.90 5.08 L4.06 4.85 L4.24 4.64 L4.43 4.43 L4.64 4.24 L4.85 4.06 L5.08 3.90 L5.33 3.77 L5.63 3.70 L6.02 3.77 L6.53 4.04 L7.08 4.42 L7.54 4.73 L7.88 4.86 L8.13 4.88 L8.35 4.83 L8.55 4.77 L8.74 4.69 L8.94 4.61 L9.13 4.53 L9.32 4.44 L9.51 4.35 L9.70 4.23 L9.87 4.04 L10.01 3.70 L10.12 3.16 L10.24 2.50 L10.41 1.96 L10.64 1.63 L10.89 1.46 L11.16 1.38 L11.44 1.33 L11.72 1.31 Z" stroke="#6a6a6a" stroke-width="1.4" stroke-linejoin="round"/><circle cx="12" cy="12" r="3.15" stroke="#6a6a6a" stroke-width="1.4"/></svg>
<svg class="b" style="left:1208px;top:24px" width="26" height="24" viewBox="0 0 26 24" fill="none"><path d="M11.8 18.4 H3.7 Q2.2 18.4 2.2 16.9 V3.4 Q2.2 1.9 3.7 1.9 H22.6 Q24.1 1.9 24.1 3.4 V12.5 M2.8 3.6 L13.1 11.6 L23.5 3.6 M15.1 18.3 H24.3 M19.6 13.9 L24.3 18.3 L19.6 22.7" stroke="#6a6a6a" stroke-width="1.45" stroke-linejoin="round" stroke-linecap="round"/></svg>
<svg class="b" style="left:1253.1px;top:24.1px" width="24" height="24" viewBox="0 0 24 24" fill="none"><circle cx="12" cy="12" r="11" stroke="#6a6a6a" stroke-width="1.4"/><path d="M8.7 8.9 Q8.9 6.6 11.9 6.6 Q15 6.6 15 9.1 Q15 10.6 13.4 11.5 Q11.9 12.4 11.9 13.8" stroke="#6a6a6a" stroke-width="1.4" stroke-linecap="round"/><circle cx="11.85" cy="17.4" r="0.95" fill="#6a6a6a"/></svg>
<svg class="b" style="left:1299.1px;top:25px" width="20" height="20" viewBox="0 0 20 20" fill="none"><path d="M1.2 1.3 L18.8 18.7 M18.8 1.3 L1.2 18.7" stroke="#6a6a6a" stroke-width="1.4" stroke-linecap="round"/></svg>
<svg class="b" style="left:270px;top:168px" width="16" height="18" viewBox="0 0 16 18" fill="none"><rect x="1.5" y="2.5" width="13" height="14" rx="3.4" stroke="#666c8e" stroke-width="1"/><path d="M1.5 6.5 H14.5 M4.6 1.5 V3 M10.6 1.5 V3" stroke="#666c8e" stroke-width="1" stroke-linecap="round"/><path d="M4.9 10 H6.1 M4.9 12.6 H6.1" stroke="#4b5075" stroke-width="1.2"/><path d="M7.4 10 H8.5" stroke="#b4b8cc" stroke-width="1"/></svg>
<svg class="b" style="left:1298px;top:168px" width="16" height="18" viewBox="0 0 16 18" fill="none"><rect x="1.5" y="2.5" width="13" height="14" rx="3.4" stroke="#666c8e" stroke-width="1"/><path d="M1.5 6.5 H14.5 M4.6 1.5 V3 M10.6 1.5 V3" stroke="#666c8e" stroke-width="1" stroke-linecap="round"/><path d="M4.9 10 H6.1 M4.9 12.6 H6.1" stroke="#4b5075" stroke-width="1.2"/><path d="M7.4 10 H8.5" stroke="#b4b8cc" stroke-width="1"/></svg>
<svg class="b" style="left:1298px;top:203px" width="16" height="18" viewBox="0 0 16 18" fill="none"><rect x="1.5" y="2.5" width="13" height="14" rx="3.4" stroke="#666c8e" stroke-width="1"/><path d="M1.5 6.5 H14.5 M4.6 1.5 V3 M10.6 1.5 V3" stroke="#666c8e" stroke-width="1" stroke-linecap="round"/><path d="M4.9 10 H6.1 M4.9 12.6 H6.1" stroke="#4b5075" stroke-width="1.2"/><path d="M7.4 10 H8.5" stroke="#b4b8cc" stroke-width="1"/></svg>
<svg class="b" style="left:1089px;top:551px" width="18.5" height="21.5" viewBox="0 0 18.5 21.5" fill="none"><path d="M6.1 19.15 H4.3 Q1.85 19.15 1.85 16.7 V4.2 Q1.85 1.75 4.3 1.75 H13.5 Q15.95 1.75 15.95 4.2 V9.7 M12.4 10.8 V19.6 M8.8 15.9 L12.4 19.7 L16.1 15.9" stroke="#0f7ae0" stroke-width="1.85" stroke-linecap="round" stroke-linejoin="round"/></svg>
<svg class="b" style="left:295px;top:741.5px" width="24" height="24" viewBox="0 0 24 24" fill="none"><path d="M21.7 11.9 A10.1 10.1 0 1 1 18.9 4.6 M20.9 1.5 V6 H16.4" stroke="#b4b4ba" stroke-width="1.5" stroke-linecap="round" stroke-linejoin="round"/></svg>
<svg class="b" style="left:403.6px;top:741.7px" width="23" height="23" viewBox="0 0 23 23" fill="none"><circle cx="11.5" cy="11.5" r="9.85" stroke="#fff" stroke-width="1.8"/><rect x="10.5" y="7.1" width="2" height="2" fill="#fff"/><rect x="10.5" y="10.5" width="2" height="2" fill="#fff"/><rect x="10.5" y="14" width="2" height="2" fill="#fff"/></svg>
<svg class="b" style="left:556.5px;top:742px" width="24" height="23" viewBox="0 0 24 23" fill="none"><path d="M5.4 6.6 V2.9 Q5.4 1.7 6.6 1.7 H16.9 Q18.1 1.7 18.1 2.9 V6.6 M5.4 14.6 H3.8 Q1.8 14.6 1.8 12.6 V9.2 Q1.8 7.2 3.8 7.2 H19.7 Q21.7 7.2 21.7 9.2 V12.6 Q21.7 14.6 19.7 14.6 H18.1 M5.4 12.9 H18.1 V19.6 Q18.1 20.8 16.9 20.8 H6.6 Q5.4 20.8 5.4 19.6 Z" stroke="#8b8b94" stroke-width="1.6" stroke-linejoin="round"/></svg>
<svg class="b" style="left:665.5px;top:741.5px" width="20" height="23" viewBox="0 0 20 23" fill="none"><path d="M2.9 1.6 H11.2 L17.8 7.4 V19.9 Q17.8 21.3 16.4 21.3 H2.9 Q1.5 21.3 1.5 19.9 V3 Q1.5 1.6 2.9 1.6 Z M11.2 1.8 V7.4 H17.6" stroke="#b4b4ba" stroke-width="1.6" stroke-linejoin="round" stroke-linecap="round"/><path d="M4.7 7.8 H8.3 M4.7 11.7 H14.5 M4.7 14.4 H14.5 M4.7 17.1 H14.5" stroke="#b4b4ba" stroke-width="1.5"/></svg>
<svg class="b" style="left:777.5px;top:742px" width="23" height="22.5" viewBox="0 0 23 22.5" fill="none"><path d="M1.4 5.2 H21.4 M7.5 5 V2.8 Q7.5 1.6 8.7 1.6 H14.4 Q15.6 1.6 15.6 2.8 V5 M4 5.6 L5.5 19.2 Q5.7 20.6 7.1 20.6 H16 Q17.4 20.6 17.6 19.2 L19 5.6 M9.2 9.4 V16.9 M13.7 9.4 V16.9" stroke="#b4b4ba" stroke-width="1.6" stroke-linecap="round" stroke-linejoin="round"/></svg>
<svg class="b" style="left:879.5px;top:742.5px" width="21" height="21" viewBox="0 0 21 21" fill="none"><path d="M3.6 9.7 H16.8 Q18.7 9.7 18.7 11.6 V17.4 Q18.7 19.3 16.8 19.3 H3.6 Q1.7 19.3 1.7 17.4 V11.6 Q1.7 9.7 3.6 9.7 Z M5.4 9.5 V6.8 Q5.4 2 11 2 Q15.3 2 16.4 5.9" stroke="#b4b4ba" stroke-width="1.6" stroke-linecap="round"/><circle cx="9.8" cy="14.3" r="1.9" stroke="#b4b4ba" stroke-width="1.5"/></svg>
<div id="frame2"></div><div id="frame"></div>
</body></html>
